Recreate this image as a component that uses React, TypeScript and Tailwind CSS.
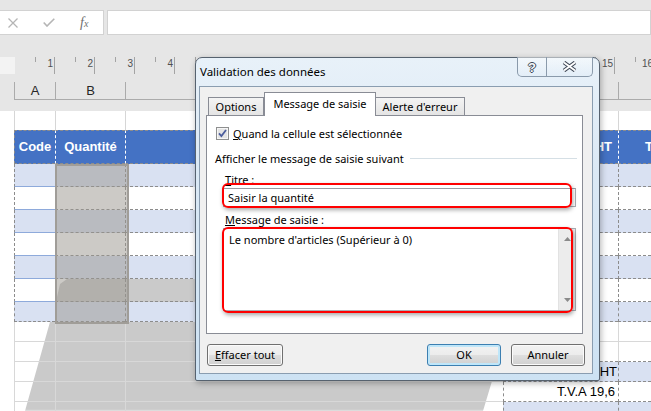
import React from 'react';

type DataRow = { h: string; blue: boolean; last?: boolean };

const dataRows: DataRow[] = [
  { h: 'h-[23px]', blue: true },
  { h: 'h-[23px]', blue: false },
  { h: 'h-[23px]', blue: true },
  { h: 'h-[23px]', blue: false },
  { h: 'h-[23px]', blue: true },
  { h: 'h-[23px]', blue: false },
  { h: 'h-[20px]', blue: true, last: true },
];

// 5..14 sit under the dialog, so they get no label
const rulerNums = [1, 2, 3, 4, 5, 6, 7, 8, 9, 10, 11, 12, 13, 14, 15, 16];
const hiddenLabel = (n: number) => n > 4 && n < 15;

const btn =
  'h-[22px] rounded-[3px] border flex items-center justify-center bg-[linear-gradient(180deg,#f3f3f3_0%,#ececec_48%,#dedede_52%,#d0d0d0_100%)]';

const outline = '[text-shadow:1px_0_#3f4856,-1px_0_#3f4856,0_1px_#3f4856,0_-1px_#3f4856]';

function CheckBox() {
  return (
    <svg width="13" height="13" viewBox="0 0 13 13">
      <rect x="0.5" y="0.5" width="12" height="12" fill="#f6f6f6" stroke="#8e8f8f" />
      <rect x="2" y="2" width="9" height="9" fill="#e4e4e4" />
      <path d="M3 6.3 L5.4 9 L10 3" stroke="#4b5d9c" strokeWidth="1.8" fill="none" />
    </svg>
  );
}

function Grid() {
  return (
    <div className="relative bg-white">
      {/* ghost shadow left by the dragged window */}
      <div className="absolute left-0 top-0 w-[651px] h-[300px] bg-[#cacaca] blur-[1px] [clip-path:polygon(67px_168px,496px_168px,492px_270px,483px_300px,25px_300px,57px_186px,60px_173px)]" />

      <div className="relative">
        {/* white row above table */}
        <div className="flex h-[19px]">
          <div className="w-[14px] shrink-0" />
          <div className="w-[41px] shrink-0 border-l border-[#d6d6d6]" />
          <div className="w-[70px] shrink-0 border-l border-[#d6d6d6]" />
          <div className="w-[378px] shrink-0 border-l border-[#d6d6d6]" />
          <div className="w-[115px] shrink-0" />
          <div className="flex-1 border-l border-[#d6d6d6]" />
        </div>

        {/* table header */}
        <div className="flex h-[34px] text-white font-bold text-[13px]">
          <div className="w-[14px] shrink-0" />
          <div className="w-[41px] shrink-0 bg-[#4472c4] border-l border-y border-dashed border-[#8c8c8c] flex items-center justify-center">
            Code
          </div>
          <div className="w-[70px] shrink-0 bg-[#4472c4] border-l border-y border-dashed border-[#8c8c8c] border-l-white flex items-center justify-center">
            Quantité
          </div>
          <div className="w-[378px] shrink-0 bg-[#4472c4] border-l border-y border-dashed border-[#8c8c8c] border-l-white" />
          <div className="w-[115px] shrink-0 bg-[#4472c4] border-y border-dashed border-[#8c8c8c] flex items-center justify-end pr-[6px] whitespace-nowrap">
            Prix HT
          </div>
          <div className="flex-1 bg-[#4472c4] border-l border-y border-dashed border-[#8c8c8c] border-l-white flex items-center pl-[26px] whitespace-nowrap overflow-hidden">
            Total
          </div>
        </div>

        {/* data rows */}
        {dataRows.map((r, i) => {
          const fill = r.blue ? 'bg-[#d9e1f2]' : '';
          return (
            <div key={i} className={`flex ${r.h}`}>
              <div className="w-[14px] shrink-0 bg-white" />
              <div
                className={`w-[41px] shrink-0 border-l border-b border-l-[#8c8c8c] [border-left-style:dashed] ${
                  r.last ? 'border-b-[#8c8c8c] [border-bottom-style:dashed]' : 'border-b-[#8eaadb]'
                } ${fill}`}
              />
              <div className={`w-[70px] shrink-0 border-l border-b border-dashed border-[#8c8c8c] ${fill}`} />
              <div className={`w-[378px] shrink-0 border-l border-b border-dashed border-[#8c8c8c] ${fill}`} />
              <div className={`w-[115px] shrink-0 border-b border-dashed border-[#8c8c8c] ${fill}`} />
              <div className={`flex-1 border-l border-b border-dashed border-[#8c8c8c] ${fill}`} />
            </div>
          );
        })}

        {/* plain rows + totals block */}
        <div className="flex h-[20px]">
          <div className="w-[14px] shrink-0 bg-white" />
          <div className="w-[41px] shrink-0 border-l border-b border-[#d8d8d8]" />
          <div className="w-[70px] shrink-0 border-l border-b border-[#d8d8d8]" />
          <div className="w-[378px] shrink-0 border-l border-b border-[#d8d8d8]" />
          <div className="w-[115px] shrink-0 border-b border-[#d8d8d8]" />
          <div className="flex-1 border-l border-b border-[#d8d8d8]" />
        </div>
        <div className="flex h-[20px]">
          <div className="w-[14px] shrink-0 bg-white" />
          <div className="w-[41px] shrink-0 border-l border-b border-[#d8d8d8]" />
          <div className="w-[70px] shrink-0 border-l border-b border-[#d8d8d8]" />
          <div className="w-[378px] shrink-0 border-l border-b border-[#d8d8d8]" />
          <div className="w-[115px] shrink-0 border-b border-dashed border-[#8c8c8c]" />
          <div className="flex-1 border-l border-b border-[#d8d8d8] [border-bottom-style:dashed] border-b-[#8c8c8c]" />
        </div>
        <div className="flex h-[20px] text-[13px] text-black">
          <div className="w-[14px] shrink-0 bg-white" />
          <div className="w-[41px] shrink-0 border-l border-b border-[#d8d8d8]" />
          <div className="w-[70px] shrink-0 border-l border-b border-[#d8d8d8]" />
          <div className="w-[378px] shrink-0 border-l border-b border-[#d8d8d8]" />
          <div className="w-[115px] shrink-0 bg-[#d9e1f2] border-l border-b border-dashed border-[#8c8c8c] flex items-center justify-end pr-[1px] whitespace-nowrap">
            Total HT
          </div>
          <div className="flex-1 bg-[#d9e1f2] border-l border-b border-dashed border-[#8c8c8c]" />
        </div>
        <div className="flex h-[20px] text-[13px] text-black">
          <div className="w-[14px] shrink-0 bg-white" />
          <div className="w-[41px] shrink-0 border-l border-b border-[#d8d8d8]" />
          <div className="w-[70px] shrink-0 border-l border-b border-[#d8d8d8]" />
          <div className="w-[378px] shrink-0 border-l border-b border-[#d8d8d8]" />
          <div className="w-[115px] shrink-0 bg-white border-l border-b border-dashed border-[#8c8c8c] flex items-center justify-end pr-[3px] whitespace-nowrap">
            T.V.A 19,6
          </div>
          <div className="flex-1 bg-white border-l border-b border-dashed border-[#8c8c8c]" />
        </div>
        <div className="flex h-[20px]">
          <div className="w-[14px] shrink-0 bg-white" />
          <div className="w-[41px] shrink-0 border-l border-b border-[#d8d8d8]" />
          <div className="w-[70px] shrink-0 border-l border-b border-[#d8d8d8]" />
          <div className="w-[378px] shrink-0 border-l border-b border-[#d8d8d8]" />
          <div className="w-[115px] shrink-0 bg-[#d9e1f2] border-l border-b border-dashed border-[#8c8c8c]" />
          <div className="flex-1 bg-[#d9e1f2] border-l border-b border-dashed border-[#8c8c8c]" />
        </div>
      </div>

      {/* selected range in column B */}
      <div className="absolute left-[55px] top-[53px] w-[74px] h-[160px] border-2 border-[#a09d98] bg-[rgba(153,149,141,0.5)]" />
    </div>
  );
}

function Dialog() {
  return (
    <div className="absolute left-[195px] top-[57px] w-[405px] h-[324px] flex flex-col rounded-t-[7px] rounded-b-[2px] border border-[#56626f] bg-[linear-gradient(180deg,#e8f1f9_0%,#dbe9f5_35%,#cde2f3_100%)] shadow-[1px_2px_6px_rgba(0,0,0,0.3)] font-['Noto_Sans',sans-serif] text-[11px] text-black">
      <div className="relative h-[28px] shrink-0 pl-[4px] flex items-center text-[11.5px]">
        Validation des données
        <div className="absolute left-[321px] top-[-1px] w-[76px] h-[20px] flex rounded-b-[5px] border border-t-0 border-[#8a9aab] bg-[linear-gradient(180deg,rgba(255,255,255,0.5),rgba(220,234,246,0.3))]">
          <div className="w-[29px] border-r border-[#8a9aab] flex items-center justify-center pt-[1px]">
            <span className={`font-['Liberation_Sans',sans-serif] font-bold text-[13px] leading-none text-[#f7f9fb] ${outline}`}>
              ?
            </span>
          </div>
          <div className="flex-1 flex items-center justify-center">
            <svg width="15" height="11" viewBox="0 0 15 11">
              <path d="M2 1.5 L13 9.5 M13 1.5 L2 9.5" stroke="#404957" strokeWidth="4" />
              <path d="M2 1.5 L13 9.5 M13 1.5 L2 9.5" stroke="#ffffff" strokeWidth="2" />
            </svg>
          </div>
        </div>
      </div>

      <div className="ml-[3px] mr-[6px] mb-[6px] flex-1 flex flex-col border border-[#8a9db0] bg-[#f0f0f0]">
        {/* tabs */}
        <div className="h-[28px] shrink-0 flex items-end pl-[8px] leading-[15px]">
          <div className="w-[56px] h-[18px] border border-b-0 border-[#898c95] bg-[linear-gradient(180deg,#f4f4f4,#e4e4e4)] flex items-center justify-center">
            Options
          </div>
          <div className="relative z-10 -mb-px w-[112px] h-[24px] border border-b-0 border-[#898c95] bg-white flex items-center justify-center pb-[2px]">
            Message de saisie
          </div>
          <div className="w-[89px] h-[18px] border border-l-0 border-b-0 border-[#898c95] bg-[linear-gradient(180deg,#f4f4f4,#e4e4e4)] flex items-center justify-center">
            Alerte d'erreur
          </div>
        </div>

        {/* tab panel */}
        <div className="relative ml-[6px] w-[377px] h-[219px] shrink-0 border border-[#898c95] bg-white leading-[15px]">
          <div className="mt-[10px] pl-[9px] flex items-center gap-[4px]">
            <CheckBox />
            <span>
              <span className="underline">Q</span>uand la cellule est sélectionnée
            </span>
          </div>

          <div className="mt-[10px] pl-[8px] flex items-center">
            <span>Afficher le message de saisie suivant</span>
            <div className="flex-1 h-px bg-[#d5dfe5] ml-[6px] mr-[5px]" />
          </div>

          <div className="mt-[6px] pl-[18px]">
            <span className="underline">T</span>itre :
          </div>
          <div className="mt-[1px] ml-[16px] w-[353px] h-[19px] border border-[#abadb3] border-t-[#9a9ca3] bg-white flex items-center pl-[4px]">
            Saisir la quantité
          </div>

          <div className="mt-[5px] pl-[18px]">
            <span className="underline">M</span>essage de saisie :
          </div>
          <div className="mt-[1px] ml-[16px] w-[353px] h-[83px] flex border border-[#abadb3] bg-white">
            <div className="flex-1 pl-[5px] pt-[3px]">Le nombre d'articles (Supérieur à 0)</div>
            <div className="w-[17px] flex flex-col items-center justify-between py-[8px] bg-[#ececec] border-l border-[#e2e2e2]">
              <svg width="7" height="4" viewBox="0 0 7 4">
                <path d="M0 4 L3.5 0 L7 4 Z" fill="#8a8a8a" />
              </svg>
              <svg width="7" height="4" viewBox="0 0 7 4">
                <path d="M0 0 L7 0 L3.5 4 Z" fill="#8a8a8a" />
              </svg>
            </div>
          </div>

          {/* red highlight frames */}
          <div className="absolute left-[15px] top-[67px] w-[350px] h-[25px] rounded-[6px] border-2 border-[#ff0000] shadow-[1px_2px_4px_rgba(0,0,0,0.35)]" />
          <div className="absolute left-[15px] top-[111px] w-[351px] h-[86px] rounded-[6px] border-2 border-[#ff0000] shadow-[1px_2px_4px_rgba(0,0,0,0.35)]" />
        </div>

        {/* buttons */}
        <div className="mt-[10px] flex pl-[7px] pr-[7px] gap-[10px]">
          <div className={`${btn} w-[76px] border-[#707070] shadow-[inset_0_0_0_1px_#fbfbfb]`}>
            <span>
              <span className="underline">E</span>ffacer tout
            </span>
          </div>
          <div className={`${btn} ml-auto w-[74px] border-[#3c7fb1] shadow-[inset_0_0_0_2px_#bfe6f9]`}>OK</div>
          <div className={`${btn} w-[74px] border-[#707070] shadow-[inset_0_0_0_1px_#fbfbfb]`}>Annuler</div>
        </div>
      </div>
    </div>
  );
}

export default function App() {
  return (
    <div className="relative w-[651px] h-[411px] overflow-hidden bg-[#e6e6e6] font-['Liberation_Sans',Arial,sans-serif]">
      {/* formula bar */}
      <div className="h-[37px] flex pt-[10px]">
        <div className="w-[104px] h-[25px] bg-white border-y border-r border-[#d2d2d2] flex items-center pl-[8px]">
          <svg width="10" height="10" viewBox="0 0 10 10">
            <path d="M0.5 0.5 L9.5 9.5 M9.5 0.5 L0.5 9.5" stroke="#b5b5b5" strokeWidth="1.3" />
          </svg>
          <svg className="ml-[25px]" width="12" height="9" viewBox="0 0 12 9">
            <path d="M0.7 4.5 L4 8 L11.3 0.7" stroke="#b5b5b5" strokeWidth="1.6" fill="none" />
          </svg>
          <span className="ml-[25px] font-['Liberation_Serif',serif] italic text-[14px] text-[#707070] leading-none">
            f<span className="text-[10px]">x</span>
          </span>
        </div>
        <div className="ml-[3px] flex-1 h-[25px] bg-white border border-[#d2d2d2]" />
      </div>

      <div className="h-[20px]" />

      {/* ruler */}
      <div className="h-[17px] flex text-[10px] leading-[12px] text-[#505050]">
        <div className="w-[15px] shrink-0 bg-[#f3f3f3]" />
        {rulerNums.map((n) => (
          <div key={n} className="relative w-[40px] shrink-0 border-r border-[#a4a4a4] flex justify-end pr-[1px] pt-[1px]">
            <span className="absolute left-[20px] top-0 w-px h-[5px] bg-[#a4a4a4]" />
            {hiddenLabel(n) ? null : n}
          </div>
        ))}
      </div>

      <div className="h-[8px]" />

      {/* column headers */}
      <div className="h-[18px] flex text-[13px] text-[#262626]">
        <div className="w-[14px] shrink-0" />
        <div className="w-[41px] shrink-0 border-l border-b border-[#ababab] flex items-center justify-center">A</div>
        <div className="w-[70px] shrink-0 border-l border-b border-[#ababab] flex items-center justify-center">B</div>
        <div className="w-[378px] shrink-0 border-l border-b border-[#ababab]" />
        <div className="w-[115px] shrink-0 border-l border-b border-[#ababab]" />
        <div className="flex-1 border-l border-b border-[#ababab]" />
      </div>

      <div className="h-[11px]" />

      <Grid />
      <Dialog />
    </div>
  );
}
